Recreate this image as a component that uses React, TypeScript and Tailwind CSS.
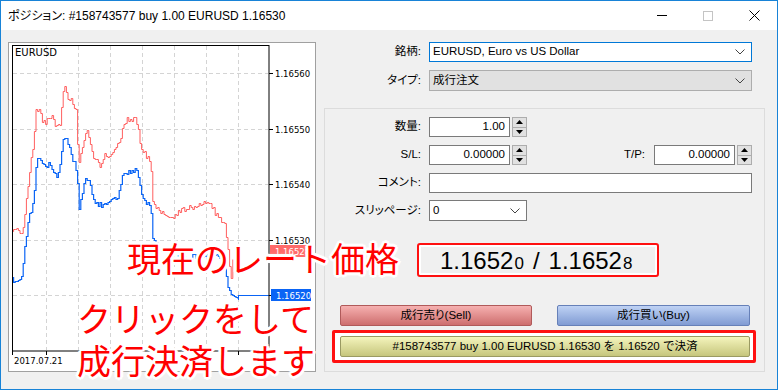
import React from 'react';

type Pt = [number, number];

// key points of the ask (red) and bid (blue) tick lines, in page pixels
const askKeys: Pt[] = [
  [12, 230], [22, 232], [25, 215], [30, 165], [33, 150], [36, 110], [41, 112], [43, 124], [48, 118],
  [53, 116], [55, 126], [60, 124], [62, 100], [64, 86], [67, 96], [72, 102], [77, 110], [78, 168],
  [80, 160], [84, 140], [87, 128], [90, 145], [93, 155], [98, 160], [100, 165], [104, 155], [110, 155],
  [115, 146], [120, 140], [123, 124], [128, 118], [135, 118], [138, 128], [141, 148], [146, 155],
  [151, 162], [152, 200], [160, 212], [170, 218], [180, 210], [190, 208], [200, 205], [211, 203],
  [216, 215], [225, 222], [228, 248], [231, 278], [234, 251],
];

const bidKeys: Pt[] = [
  [12, 279], [21, 279], [23, 265], [28, 220], [33, 203], [37, 158], [42, 160], [45, 168], [50, 162],
  [52, 170], [57, 176], [60, 165], [63, 140], [65, 135], [70, 148], [73, 160], [77, 172], [79, 210],
  [82, 195], [85, 180], [90, 180], [93, 200], [100, 205], [110, 200], [118, 198], [123, 175],
  [130, 172], [137, 170], [141, 190], [145, 200], [151, 205], [152, 238], [160, 250], [180, 258],
  [200, 255], [215, 252], [225, 262], [228, 285], [232, 295], [238, 295],
];

function interp(keys: Pt[], x: number) {
  for (let i = 1; i < keys.length; i++) {
    if (x <= keys[i][0]) {
      const [x0, y0] = keys[i - 1];
      const [x1, y1] = keys[i];
      return y0 + ((y1 - y0) * (x - x0)) / (x1 - x0);
    }
  }
  return keys[keys.length - 1][1];
}

function noise(n: number) {
  const s = Math.sin(n * 12.9898) * 43758.5453;
  return s - Math.floor(s);
}

function stepPath(keys: Pt[], seed: number, amp: number) {
  const end = keys[keys.length - 1][0];
  let d = '';
  let prev = 0;
  let i = 0;
  for (let x = 12; x <= end; x += 1.6) {
    const y = Math.round(interp(keys, x) + (noise(i * seed + seed) - 0.5) * 2 * amp) + 0.5;
    if (i === 0) d += `M${x.toFixed(1)} ${y}`;
    else d += ` L${x.toFixed(1)} ${prev} L${x.toFixed(1)} ${y}`;
    prev = y;
    i++;
  }
  return d;
}

const hLines = [73, 129, 184, 240, 295];
const vLines = [46, 78, 110, 142, 174, 206, 238];
const prices = ['1.16560', '1.16550', '1.16540', '1.16530'];

function Chart() {
  return (
    <svg width={306} height={328} viewBox="9 43 306 328" className="block">
      {hLines.map((y) => (
        <line key={y} x1={13} x2={268} y1={y + 0.5} y2={y + 0.5} stroke="#d4d4d4" strokeDasharray="4 3" />
      ))}
      {vLines.map((x) => (
        <line key={x} x1={x + 0.5} x2={x + 0.5} y1={46} y2={350} stroke="#d4d4d4" strokeDasharray="4 3" />
      ))}
      <path d={stepPath(askKeys, 7.3, 3)} fill="none" stroke="#ff5f5f" strokeWidth={1} />
      <path d={stepPath(bidKeys, 3.1, 3)} fill="none" stroke="#0a64f5" strokeWidth={1.2} />
      <line x1={238} x2={271} y1={295.5} y2={295.5} stroke="#0a64f5" />
      <line x1={238.5} x2={238.5} y1={295} y2={300} stroke="#0a64f5" />
      <rect x={12.5} y={45.5} width={256.5} height={305.5} fill="none" stroke="#000" />
      {hLines.map((y) => (
        <line key={'t' + y} x1={269} x2={273} y1={y + 0.5} y2={y + 0.5} stroke="#000" />
      ))}
      {[12.5, 46.5, 238.5].map((x) => (
        <line key={'b' + x} x1={x} x2={x} y1={351} y2={355} stroke="#000" />
      ))}
      <text x={15} y={56} fontSize={10} fontFamily="DejaVu Sans, sans-serif" fill="#000">EURUSD</text>
      {prices.map((p, i) => (
        <text key={p} x={275} y={hLines[i] + 3.5} fontSize={8.5} fontFamily="DejaVu Sans, sans-serif" fill="#000">
          {p}
        </text>
      ))}
      <rect x={270} y={245} width={40} height={12} fill="#ff6a6a" />
      <text x={275} y={254.5} fontSize={8.5} fontFamily="DejaVu Sans, sans-serif" fill="#fff">1.16528</text>
      <rect x={271} y={289} width={40} height={12} fill="#0a64f5" />
      <text x={276} y={298.5} fontSize={8.5} fontFamily="DejaVu Sans, sans-serif" fill="#fff">1.16520</text>
      <text x={14} y={364} fontSize={8.5} fontFamily="DejaVu Sans, sans-serif" fill="#000">2017.07.21</text>
    </svg>
  );
}

function Chevron() {
  return (
    <svg width={10} height={6} viewBox="0 0 10 6">
      <polyline points="0.5,0.5 5,5 9.5,0.5" fill="none" stroke="#444" strokeWidth={1} />
    </svg>
  );
}

function Spinner() {
  return (
    <div className="ml-[2px] w-[15px] h-[20px] flex flex-col border border-[#adadad] bg-[#e1e1e1]">
      <div className="flex-1 flex items-center justify-center border-b border-[#adadad]">
        <svg width={7} height={4} viewBox="0 0 7 4"><polygon points="3.5,0 7,4 0,4" fill="#000" /></svg>
      </div>
      <div className="flex-1 flex items-center justify-center">
        <svg width={7} height={4} viewBox="0 0 7 4"><polygon points="0,0 7,0 3.5,4" fill="#000" /></svg>
      </div>
    </div>
  );
}

function Label({ children, w = 'w-[96px]' }: { children: React.ReactNode; w?: string }) {
  return <span className={`${w} shrink-0 text-right [font-feature-settings:'palt']`}>{children}</span>;
}

function NumInput({ value }: { value: string }) {
  return (
    <div className="ml-[8px] w-[81px] h-[20px] bg-white border border-[#7a7a7a] flex items-center justify-end pr-[4px]">
      {value}
    </div>
  );
}

const glow =
  "[text-shadow:2px_2px_0_#fff,-2px_-2px_0_#fff,2px_-2px_0_#fff,-2px_2px_0_#fff,0_3px_0_#fff,0_-3px_0_#fff,3px_0_0_#fff,-3px_0_0_#fff,0_0_5px_#fff]";

export default function App() {
  return (
    <div className="relative w-[778px] h-[390px] border border-[#1883d7] bg-[#f0f0f0] flex flex-col overflow-hidden text-[11.5px] text-black font-['Liberation_Sans','Noto_Sans_CJK_JP',sans-serif]">
      {/* title bar */}
      <div className="h-[29px] shrink-0 bg-white flex items-center">
        <span className="pl-[7px] text-[12px] [font-feature-settings:'palt']">ポジション: #158743577 buy 1.00 EURUSD 1.16530</span>
        <div className="ml-auto flex h-full">
          <div className="w-[46px] flex items-center justify-center">
            <div className="w-[10px] h-px bg-black" />
          </div>
          <div className="w-[46px] flex items-center justify-center">
            <div className="w-[10px] h-[10px] border border-[#c4c4c4]" />
          </div>
          <div className="w-[46px] flex items-center justify-center">
            <svg width={11} height={11} viewBox="0 0 11 11">
              <path d="M0.5 0.5 L10.5 10.5 M10.5 0.5 L0.5 10.5" stroke="#000" strokeWidth={1} />
            </svg>
          </div>
        </div>
      </div>

      <div className="flex-1 flex pl-[7px] pt-[12px] gap-[8px]">
        {/* chart */}
        <div className="w-[308px] h-[330px] bg-white border border-[#a0a0a0]">
          <Chart />
        </div>

        {/* order form */}
        <div className="w-[441px] flex flex-col">
          <div className="flex items-center h-[20px]">
            <Label w="w-[97px]">銘柄:</Label>
            <div className="ml-[8px] w-[323px] h-[20px] bg-white border border-[#0078d7] flex items-center justify-between pl-[3px] pr-[6px]">
              <span>EURUSD, Euro vs US Dollar</span>
              <Chevron />
            </div>
          </div>
          <div className="flex items-center h-[21px] mt-[8px]">
            <Label w="w-[97px]">タイプ:</Label>
            <div className="ml-[8px] w-[323px] h-[21px] bg-[#e1e1e1] border border-[#adadad] flex items-center justify-between pl-[3px] pr-[6px]">
              <span>成行注文</span>
              <Chevron />
            </div>
          </div>

          <div className="mt-[17px] h-[264px] border border-[#dcdcdc] flex flex-col pt-[8px]">
            <div className="flex items-center h-[20px]">
              <Label>数量:</Label>
              <NumInput value="1.00" />
              <Spinner />
            </div>
            <div className="flex items-center h-[20px] mt-[8px]">
              <Label>S/L:</Label>
              <NumInput value="0.00000" />
              <Spinner />
              <Label w="w-[118px]">T/P:</Label>
              <div className="ml-[1px]" />
              <NumInput value="0.00000" />
              <Spinner />
            </div>
            <div className="flex items-center h-[20px] mt-[8px]">
              <Label>コメント:</Label>
              <div className="ml-[8px] w-[323px] h-[20px] bg-white border border-[#7a7a7a]" />
            </div>
            <div className="flex items-center h-[21px] mt-[7px]">
              <Label>スリッページ:</Label>
              <div className="ml-[8px] w-[98px] h-[21px] bg-white border border-[#7a7a7a] flex items-center justify-between pl-[3px] pr-[6px]">
                <span>0</span>
                <Chevron />
              </div>
            </div>

            <div className="ml-[92px] mt-[22px] w-[242px] h-[34px] border-[2px] border-[#ff1010] rounded-[3px] bg-white p-[2px]">
              <div className="h-full bg-[#f0f0f0] flex items-baseline pl-[19px] pt-[1px] text-[24px] leading-[26px] font-['Liberation_Sans',sans-serif]">
                <span>1.1652</span>
                <span className="text-[17px] ml-[1px]">0</span>
                <span className="mx-[9px]">/</span>
                <span>1.1652</span>
                <span className="text-[17px] ml-[1px]">8</span>
              </div>
            </div>

            <div className="flex mt-[28px] ml-[15px] gap-[25px]">
              <div className="w-[192px] h-[21px] rounded-[2px] border border-[#b05a5a] bg-gradient-to-b from-[#f6b0b0] to-[#cd6e6e] flex items-center justify-center [font-feature-settings:'palt']">
                成行売り(Sell)
              </div>
              <div className="w-[193px] h-[21px] rounded-[2px] border border-[#6680b8] bg-gradient-to-b from-[#bfd2f4] to-[#809bd3] flex items-center justify-center [font-feature-settings:'palt']">
                成行買い(Buy)
              </div>
            </div>

            <div className="ml-[7px] mt-[4px] w-[424px] h-[33px] border-[3px] border-[#ff1010] rounded-[2px] bg-white pt-[3px] pl-[5px]">
              <div className="w-[410px] h-[21px] rounded-[2px] border border-[#9a9a62] bg-gradient-to-b from-[#f4f4bc] to-[#c6c67c] flex items-center justify-center">
                #158743577 buy 1.00 EURUSD 1.16530 を 1.16520 で決済
              </div>
            </div>
          </div>
        </div>
      </div>

      {/* red callouts laid over the screenshot */}
      <div className={`absolute left-[126px] top-[236px] text-[34px] leading-[42px] text-[#ff0000] whitespace-nowrap font-['Noto_Sans_CJK_JP',sans-serif] ${glow}`}>
        現在のレート価格
      </div>
      <div className={`absolute left-[76px] top-[296px] text-[34px] leading-[42px] text-[#ff0000] whitespace-nowrap font-['Noto_Sans_CJK_JP',sans-serif] ${glow}`}>
        <div>クリックをして</div>
        <div>成行決済します</div>
      </div>
    </div>
  );
}
